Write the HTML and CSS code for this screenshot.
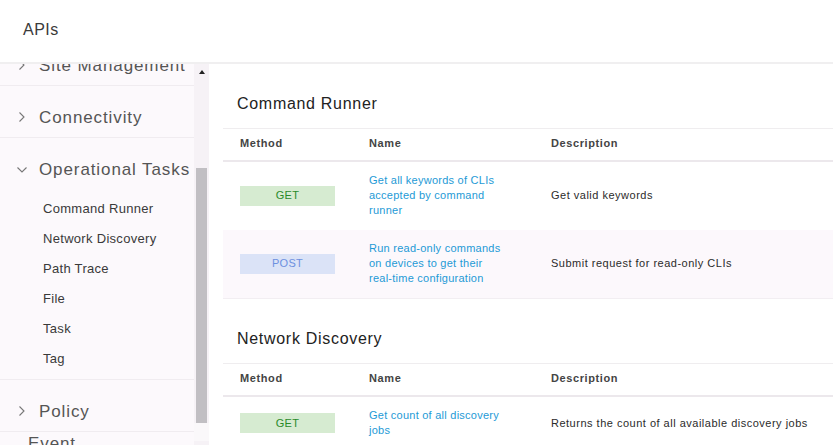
FILE: index.html
```html
<!DOCTYPE html>
<html lang="en">
<head>
<meta charset="utf-8">
<title>APIs</title>
<link rel="stylesheet" href="styles.css">
</head>
<body>
<div class="app">
  <header class="topbar">APIs</header>
  <div class="body">
    <nav class="sidebar">
      <ul class="cats">
        <li class="cat">
          <div class="cat-head"><svg class="chev" viewBox="0 0 10 10"><polyline points="2.5,0.5 7,5 2.5,9.5"/></svg><span>Site Management</span></div>
        </li>
        <li class="cat">
          <div class="cat-head"><svg class="chev" viewBox="0 0 10 10"><polyline points="2.5,0.5 7,5 2.5,9.5"/></svg><span>Connectivity</span></div>
        </li>
        <li class="cat open">
          <div class="cat-head"><svg class="chev down" viewBox="0 0 10 10"><polyline points="0.5,2.5 5,7 9.5,2.5"/></svg><span>Operational Tasks</span></div>
          <ul class="subs">
            <li>Command Runner</li>
            <li>Network Discovery</li>
            <li>Path Trace</li>
            <li>File</li>
            <li>Task</li>
            <li>Tag</li>
          </ul>
        </li>
        <li class="cat">
          <div class="cat-head"><svg class="chev" viewBox="0 0 10 10"><polyline points="2.5,0.5 7,5 2.5,9.5"/></svg><span>Policy</span></div>
        </li>
        <li class="cat event">
          <div class="cat-head"><span>Event</span></div>
        </li>
      </ul>
    </nav>
    <div class="scrollbar">
      <div class="sb-up"><span class="sb-tri"></span></div>
      <div class="sb-track"><div class="sb-thumb"></div></div>
      <div class="sb-down"></div>
      <div class="sb-end"></div>
    </div>
    <main class="main">
      <section class="section">
        <h2 class="sec-title">Command Runner</h2>
        <div class="table">
          <div class="tr th">
            <div class="td">Method</div>
            <div class="td">Name</div>
            <div class="td">Description</div>
          </div>
          <div class="tr">
            <div class="td"><span class="badge get">GET</span></div>
            <div class="td"><a class="link">Get all keywords of CLIs accepted by command runner</a></div>
            <div class="td desc">Get valid keywords</div>
          </div>
          <div class="tr alt">
            <div class="td"><span class="badge post">POST</span></div>
            <div class="td"><a class="link">Run read-only commands on devices to get their <span class="nowrap">real-time</span> configuration</a></div>
            <div class="td desc">Submit request for read-only CLIs</div>
          </div>
        </div>
      </section>
      <section class="section">
        <h2 class="sec-title">Network Discovery</h2>
        <div class="table">
          <div class="tr th">
            <div class="td">Method</div>
            <div class="td">Name</div>
            <div class="td">Description</div>
          </div>
          <div class="tr">
            <div class="td"><span class="badge get">GET</span></div>
            <div class="td"><a class="link">Get count of all discovery jobs</a></div>
            <div class="td desc">Returns the count of all available discovery jobs</div>
          </div>
        </div>
      </section>
    </main>
  </div>
</div>
</body>
</html>
```
FILE: styles.css
```css
* { box-sizing: border-box; }
html, body { margin: 0; padding: 0; }
body {
  font-family: "Liberation Sans", Arial, sans-serif;
  background: #ffffff;
  color: #333;
  width: 833px;
  height: 445px;
  overflow: hidden;
}
.app { display: flex; flex-direction: column; height: 445px; }
.topbar {
  height: 64px;
  flex: none;
  padding: 20px 0 0 23px;
  font-size: 16px;
  line-height: 20px;
  letter-spacing: 0.5px;
  color: #3a3a3a;
  border-bottom: 2px solid #f0eff0;
}
.body { display: flex; flex: 1; min-height: 0; }

.sidebar {
  width: 194px;
  flex: none;
  background: #fcf9fc;
  overflow: hidden;
}
.cats { list-style: none; margin: -30px 0 0 0; padding: 0; }
.cat { border-bottom: 1px solid #f0ecf0; }
.cat-head {
  display: flex;
  align-items: center;
  padding: 22px 0 9px 17px;
  font-size: 17px;
  line-height: 20px;
  letter-spacing: 0.9px;
  color: #555;
  white-space: nowrap;
}
.chev {
  width: 10px;
  height: 10px;
  flex: none;
  margin-right: 12px;
  fill: none;
  stroke: #777;
  stroke-width: 1.1;
  transform: translateY(-1px);
}
.chev.down { transform: translateY(0); }
.subs { list-style: none; margin: 0; padding: 5px 0 5px 0; }
.subs li {
  padding-left: 43px;
  font-size: 13px;
  line-height: 30px;
  letter-spacing: 0.3px;
  color: #3a3a3a;
}
.event .cat-head { padding: 2px 0 0 28px; }

.scrollbar {
  width: 15px;
  flex: none;
  display: flex;
  flex-direction: column;
  background: #f6f2f6;
}
.sb-up { height: 16px; display: flex; align-items: center; justify-content: center; }
.sb-tri {
  width: 0; height: 0;
  border-left: 3px solid transparent;
  border-right: 3px solid transparent;
  border-bottom: 4px solid #222;
}
.sb-track { padding: 88px 0 0 2px; }
.sb-thumb { width: 11px; height: 255px; background: #c1bfc3; }
.sb-down { height: 18px; background: #faf8fa; }
.sb-end { height: 4px; }

.main {
  flex: 1;
  min-width: 0;
  overflow: hidden;
  padding-left: 14px;
  background: #fff;
}
.section { padding-top: 30px; }
.sec-title {
  margin: 0 0 14px 0;
  padding-left: 14px;
  font-size: 16px;
  line-height: 20px;
  font-weight: normal;
  letter-spacing: 0.7px;
  color: #222;
}
.table { width: 100%; border-top: 1px solid #efedef; }
.tr {
  display: grid;
  grid-template-columns: 129px 182px 1fr;
  align-items: center;
  padding: 11px 0 12px 0;
  font-size: 11px;
  line-height: 15px;
}
.tr.th {
  padding: 7px 0 9px 0;
  border-bottom: 2px solid #ece8ec;
  font-weight: bold;
  letter-spacing: 0.6px;
  color: #444;
}
.tr.alt { background: #fcf8fc; border-bottom: 1px solid #f2eef2; }
.td { padding-left: 17px; }
.badge {
  display: flex;
  align-items: center;
  justify-content: center;
  width: 95px;
  height: 20px;
  font-size: 11px;
  letter-spacing: 0.3px;
}
.badge.get { background: #d6ebd1; color: #2a8a2a; }
.badge.post { background: #dbe3f7; color: #6d90df; }
.link {
  display: block;
  max-width: 145px;
  color: #1e9ad6;
  letter-spacing: 0.25px;
  text-decoration: none;
}
.nowrap { white-space: nowrap; }
.desc { color: #2b2b2b; letter-spacing: 0.5px; }
```
